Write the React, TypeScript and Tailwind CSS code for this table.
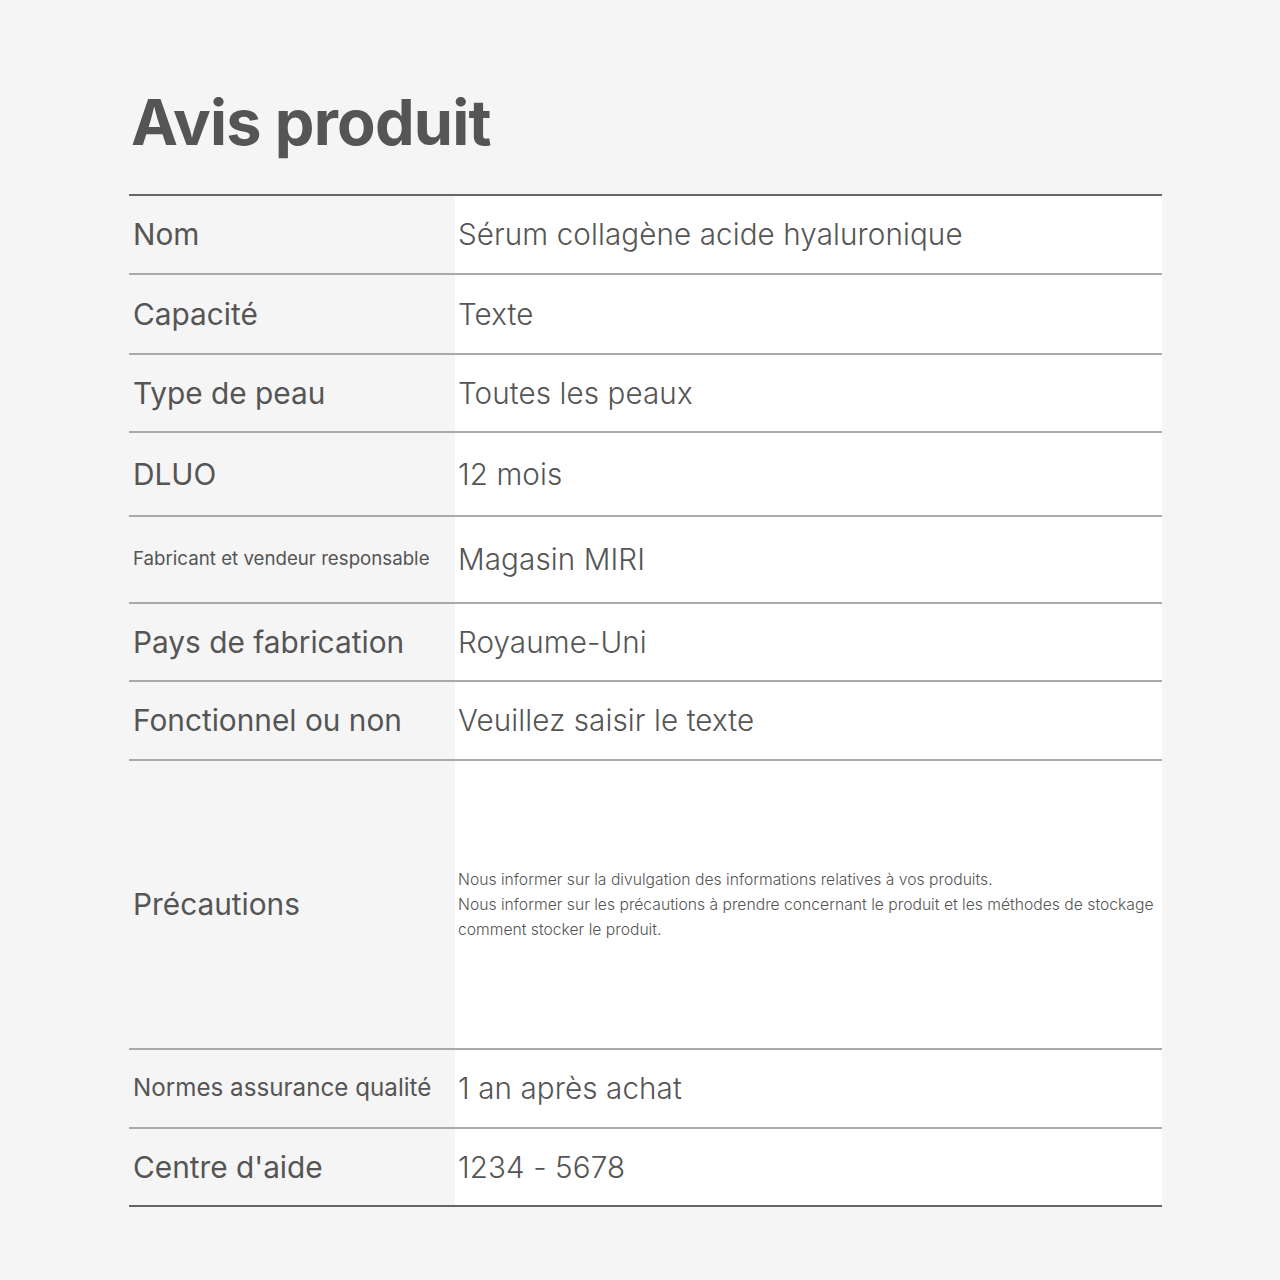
const ROWS: { label: string; value: React.ReactNode; h: string; labelSize?: string }[] = [
  { label: 'Nom', value: 'Sérum collagène acide hyaluronique', h: 'h-[79px]' },
  { label: 'Capacité', value: 'Texte', h: 'h-[80px]' },
  { label: 'Type de peau', value: 'Toutes les peaux', h: 'h-[78px]' },
  { label: 'DLUO', value: '12 mois', h: 'h-[84px]' },
  {
    label: 'Fabricant et vendeur responsable',
    value: 'Magasin MIRI',
    h: 'h-[87px]',
    labelSize: 'text-[18.7px]',
  },
  { label: 'Pays de fabrication', value: 'Royaume-Uni', h: 'h-[78px]' },
  { label: 'Fonctionnel ou non', value: 'Veuillez saisir le texte', h: 'h-[79px]' },
  {
    label: 'Précautions',
    value: (
      <div className="whitespace-nowrap text-[15.7px] font-light leading-[25px] text-[#555]">
        <p>Nous informer sur la divulgation des informations relatives à vos produits.</p>
        <p>Nous informer sur les précautions à prendre concernant le produit et les méthodes de stockage</p>
        <p>comment stocker le produit.</p>
      </div>
    ),
    h: 'h-[289px]',
  },
  {
    label: 'Normes assurance qualité',
    value: '1 an après achat',
    h: 'h-[79px]',
    labelSize: 'text-[24.2px]',
  },
  { label: "Centre d'aide", value: '1234 - 5678', h: 'h-[78px]' },
];

export default function App() {
  return (
    <div
      className="min-h-[1280px] w-[1280px] bg-[#f5f5f5] pl-[129px] pt-[84px]"
      style={{ fontFamily: 'Inter, "Noto Sans", sans-serif' }}
    >
      {/* Title */}
      <h1 className="pl-[2px] text-[63px] font-bold leading-[76px] tracking-[-0.8px] text-[#555]">
        Avis produit
      </h1>

      {/* Table */}
      <div className="mt-[34px] w-[1033px] border-t-2 border-[#666]">
        {ROWS.map((row, i) => {
          const last = i === ROWS.length - 1;
          return (
            <div
              key={row.label}
              className={`flex ${row.h} border-b-2 ${last ? 'border-[#666]' : 'border-[#aaa]'}`}
            >
              <div className="flex w-[326px] shrink-0 items-center pl-[4px]">
                <span className={`${row.labelSize ?? 'text-[29.8px]'} text-[#555]`}>{row.label}</span>
              </div>
              <div className="flex flex-1 items-center bg-white pl-[3px]">
                {typeof row.value === 'string' ? (
                  <span className="text-[29.6px] font-light tracking-[0.1px] text-[#555]">{row.value}</span>
                ) : (
                  row.value
                )}
              </div>
            </div>
          );
        })}
      </div>
    </div>
  );
}
